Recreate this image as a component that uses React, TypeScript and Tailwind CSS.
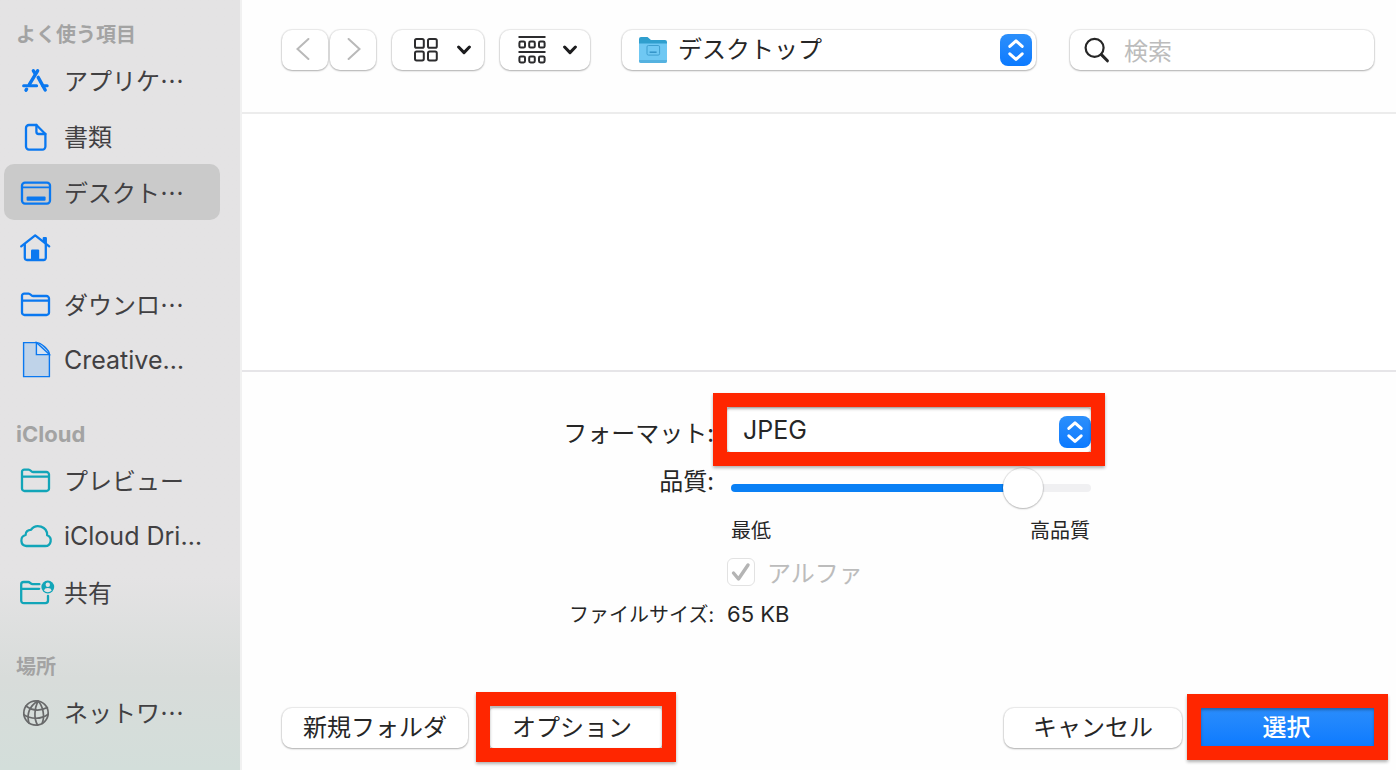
import { useState } from 'react';
import type { ReactNode } from 'react';

const blue = 'text-[#0a78f0]';
const teal = 'text-[#12a5b8]';

function Icon({ children, className = '' }: { children: ReactNode; className?: string }) {
  return (
    <svg
      viewBox="0 0 32 32"
      fill="none"
      stroke="currentColor"
      strokeWidth="2.3"
      strokeLinecap="round"
      strokeLinejoin="round"
      className={`w-8 h-8 shrink-0 overflow-visible ${className}`}
      aria-hidden="true"
    >
      {children}
    </svg>
  );
}

const AppsIcon = () => (
  <Icon className={blue}>
    <g strokeWidth="3.4">
      <path d="M17.6 6.8L9.4 20.4M6.6 25.2L6 26.2" />
      <path d="M13.4 6.8L15 9.4M18.2 13.4L25.2 26" />
      <path d="M3.6 21.7H16.6M22.8 21.7H27.2" strokeWidth="3" />
    </g>
  </Icon>
);

const DocIcon = () => (
  <Icon className={blue}>
    <path d="M9 5H16.4L25.4 14V26.6A3 3 0 0 1 22.4 29.6H9A3 3 0 0 1 6 26.6V8A3 3 0 0 1 9 5Z" />
    <path d="M16.4 5V11.8A2.2 2.2 0 0 0 18.6 14H25.4" />
  </Icon>
);

const DesktopIcon = () => (
  <Icon className={blue}>
    <rect x="2" y="6.6" width="28" height="21" rx="3" />
    <path d="M2 11.4H30" strokeWidth="1.8" />
    <rect x="6.6" y="20.6" width="19" height="4.2" rx="1" fill="currentColor" stroke="none" />
  </Icon>
);

const HomeIcon = () => (
  <Icon className={blue}>
    <path d="M1.2 14.4L15.2 3.4L29.2 14.4" />
    <path d="M23.8 9V6.2H25.8V11.4" />
    <path d="M4.8 12.6V26A2.2 2.2 0 0 0 7 28H23.4A2.2 2.2 0 0 0 25.8 26V12.6" />
    <path d="M11 28.4V18.6A1.2 1.2 0 0 1 12.2 17.4H18A1.2 1.2 0 0 1 19.2 18.6V28.4Z" fill="currentColor" stroke="none" />
  </Icon>
);

const FolderIcon = ({ className }: { className: string }) => (
  <Icon className={className}>
    <path d="M2 12.6V7.8A2.2 2.2 0 0 1 4.2 5.6H8.6C10.6 5.6 11 8 13 8H26.4A2.6 2.6 0 0 1 29 10.6V24.4A2.6 2.6 0 0 1 26.4 27H4.6A2.6 2.6 0 0 1 2 24.4V12.6H29" />
  </Icon>
);

const FileIcon = () => (
  <Icon className={blue}>
    <g strokeWidth="1.4" strokeLinejoin="miter">
      <path d="M3.6 -1.4H16.4C21 -1.4 29.4 6 29.4 10.6V32.6H3.6Z" fill="#bfd3e9" />
      <path d="M16.4 -1.4L29.4 10.6H16.4Z" fill="#d6e3f2" />
    </g>
  </Icon>
);

const CloudIcon = () => (
  <Icon className={teal}>
    <path d="M6.4 26H25.2A5.6 5.6 0 0 0 27.2 15.2A9 9 0 0 0 11 9.8A5 5 0 0 0 5.6 15A5.6 5.6 0 0 0 6.4 26Z" />
  </Icon>
);

const SharedIcon = () => (
  <Icon className={teal}>
    <path d="M19.4 8.2H12.6C10.6 8.2 10.2 6 8.2 6H3.6A2.4 2.4 0 0 0 1.2 8.4V24.6A2.6 2.6 0 0 0 3.8 27.2H25.4A2.6 2.6 0 0 0 28 24.6V19.8M1.2 12.8H19.2" />
    <circle cx="27.8" cy="11" r="6.4" fill="currentColor" stroke="none" />
    <circle cx="27.8" cy="8.8" r="2.2" fill="#e4e3e4" stroke="none" />
    <path d="M23.9 14.4A4 3 0 0 1 31.7 14.4A5.2 5.2 0 0 1 23.9 14.4Z" fill="#e4e3e4" stroke="none" />
  </Icon>
);

const GlobeIcon = () => (
  <Icon className="text-[#68696a]">
    <g strokeWidth="1.7">
      <circle cx="16" cy="17" r="12.2" />
      <path d="M18 4.8C10 10 6.6 18 8.8 26.8M18 4.8C14.6 12 13.4 22 17.6 29.2M18 4.8C23 10 25 20 22.2 27.4" />
      <path d="M6 10C12 14.6 20 15 27.4 11.6M3.8 18.6C11 23.6 21 23.4 28.2 18.2" />
    </g>
  </Icon>
);

const sections = [
  {
    title: 'よく使う項目',
    items: [
      { id: 'apps', label: 'アプリケ…', icon: <AppsIcon /> },
      { id: 'documents', label: '書類', icon: <DocIcon /> },
      { id: 'desktop', label: 'デスクト…', icon: <DesktopIcon /> },
      { id: 'home', label: '', icon: <HomeIcon /> },
      { id: 'downloads', label: 'ダウンロ…', icon: <FolderIcon className={blue} /> },
      { id: 'creative', label: 'Creative…', icon: <FileIcon />, latin: true },
    ],
  },
  {
    title: 'iCloud',
    latin: true,
    items: [
      { id: 'preview', label: 'プレビュー', icon: <FolderIcon className={teal} /> },
      { id: 'drive', label: 'iCloud Dri…', icon: <CloudIcon />, latin: true },
      { id: 'shared', label: '共有', icon: <SharedIcon /> },
    ],
  },
  {
    title: '場所',
    items: [{ id: 'network', label: 'ネットワ…', icon: <GlobeIcon /> }],
  },
];

function Sidebar() {
  const [selected, setSelected] = useState('desktop');

  return (
    <aside className="w-[242px] shrink-0 border-r-2 border-[#f1f1f1] bg-linear-to-b from-[#e4e3e4] from-75% via-[#d8dcda] via-88% to-[#d3deda] pt-4">
      <nav className="flex flex-col gap-7">
        {sections.map((section) => (
          <section key={section.title}>
            <h2
              className={`flex items-center h-9 pl-4 font-bold text-[#a3a3a3] ${
                section.latin ? "text-[22px] font-['Inter',sans-serif]" : 'text-xl'
              }`}
            >
              {section.title}
            </h2>
            {section.items.map((item) => (
              <a
                key={item.id}
                href={`#${item.id}`}
                aria-label={item.label || item.id}
                onClick={() => setSelected(item.id)}
                className={`flex items-center gap-3 h-14 ml-1 mr-5 pl-4 rounded-[10px] text-[#414042] whitespace-nowrap ${
                  selected === item.id ? 'bg-[#cacaca]' : ''
                } ${item.latin ? "text-[25px] font-['Inter',sans-serif]" : 'text-2xl'}`}
              >
                {item.icon}
                <span className={item.latin ? 'pt-0.5' : ''}>{item.label}</span>
              </a>
            ))}
          </section>
        ))}
      </nav>
    </aside>
  );
}

const box = 'bg-white shadow-[0_0_1px_1px_rgba(0,0,0,0.08),0_1px_2px_rgba(0,0,0,0.25)]';

function Stepper() {
  return (
    <svg viewBox="0 0 32 32" className="w-8 h-8 rounded-lg bg-linear-to-b from-[#2b8ffb] to-[#0a7aff]" aria-hidden="true">
      <path
        d="M9.8 12.4L16 6.8L22.2 12.4M9.8 19.8L16 25.4L22.2 19.8"
        fill="none"
        stroke="#fff"
        strokeWidth="3"
        strokeLinecap="round"
        strokeLinejoin="round"
      />
    </svg>
  );
}

function Caret() {
  return (
    <svg viewBox="0 0 14 10" className="w-3.5 h-2.5" aria-hidden="true">
      <path d="M1.6 2L7 7.6L12.4 2" fill="none" stroke="#1c1c1e" strokeWidth="3" strokeLinecap="round" strokeLinejoin="round" />
    </svg>
  );
}

function Toolbar() {
  return (
    <header className="flex items-start h-[114px] pt-[30px] pl-10 pr-[22px] border-b-2 border-[#ececec]">
      <div className="flex gap-0.5">
        <button type="button" aria-label="戻る" className={`flex items-center justify-center w-[46px] h-10 pr-1 pb-0.5 rounded-[10px] ${box}`}>
          <svg viewBox="0 0 14 22" className="w-3.5 h-[22px]" fill="none" stroke="#b9b9b9" strokeWidth="2" strokeLinecap="round">
            <path d="M12.4 1L1.5 11L12.4 21" />
          </svg>
        </button>
        <button type="button" aria-label="進む" className={`flex items-center justify-center w-[46px] h-10 pl-0.5 pb-0.5 rounded-[10px] ${box}`}>
          <svg viewBox="0 0 14 22" className="w-3.5 h-[22px]" fill="none" stroke="#b9b9b9" strokeWidth="2" strokeLinecap="round">
            <path d="M1.6 1L12.5 11L1.6 21" />
          </svg>
        </button>
      </div>

      <button type="button" aria-label="アイコン表示" className={`flex items-center justify-between w-[92px] h-10 ml-4 pl-[22px] pr-[13px] rounded-[10px] ${box}`}>
        <svg viewBox="0 0 24 24" className="w-6 h-6" fill="none" stroke="#2c2c2e" strokeWidth="2">
          <rect x="1" y="1" width="8.8" height="8.8" rx="1.6" />
          <rect x="14" y="1" width="8.8" height="8.8" rx="1.6" />
          <rect x="1" y="13.6" width="8.8" height="8.8" rx="1.6" />
          <rect x="14" y="13.6" width="8.8" height="8.8" rx="1.6" />
        </svg>
        <Caret />
      </button>

      <button type="button" aria-label="グループ" className={`flex items-center justify-between w-[90px] h-10 ml-4 pl-[18px] pr-[13px] rounded-[10px] ${box}`}>
        <svg viewBox="0 0 28 28" className="w-7 h-7" fill="none" stroke="#2c2c2e" strokeWidth="2">
          <path d="M0.5 1H27.5M0.5 16H27.5" />
          <rect x="1.4" y="5.6" width="5.6" height="6" rx="1.4" />
          <rect x="11.2" y="5.6" width="5.6" height="6" rx="1.4" />
          <rect x="21" y="5.6" width="5.6" height="6" rx="1.4" />
          <rect x="1.4" y="20.4" width="5.6" height="6" rx="1.4" />
          <rect x="11.2" y="20.4" width="5.6" height="6" rx="1.4" />
          <rect x="21" y="20.4" width="5.6" height="6" rx="1.4" />
        </svg>
        <Caret />
      </button>

      <div className="relative flex-1 ml-8">
        <select aria-label="場所" className={`block appearance-none w-full h-10 pl-14 pr-10 pb-1 text-2xl text-[#262626] rounded-[10px] ${box}`}>
          <option>デスクトップ</option>
        </select>
        <svg viewBox="0 0 30 28" className="absolute left-4 top-1.5 w-[30px] h-7 pointer-events-none" aria-hidden="true">
          <path d="M1 3A2 2 0 0 1 3 1H9.5L13 4H27A2 2 0 0 1 29 6V12H1Z" fill="#2f9fce" />
          <path d="M1 7.4H29V25A2 2 0 0 1 27 27H3A2 2 0 0 1 1 25Z" fill="#6fc8f3" />
          <path d="M1 24H29V25A2 2 0 0 1 27 27H3A2 2 0 0 1 1 25Z" fill="#55b2e0" />
          <rect x="9" y="9.5" width="12.6" height="9.6" rx="1.4" fill="none" stroke="#3f9fd0" />
          <path d="M11.6 16.2H18.6" stroke="#2f8fc4" strokeWidth="1.4" />
        </svg>
        <span className="absolute right-1 top-1 pointer-events-none">
          <Stepper />
        </span>
      </div>

      <label className={`flex items-center gap-3.5 w-[304px] h-10 ml-[34px] pl-3.5 rounded-[10px] ${box}`}>
        <svg viewBox="0 0 26 26" className="w-[26px] h-[26px] shrink-0" fill="none" stroke="#262626" strokeLinecap="round" aria-hidden="true">
          <circle cx="10.6" cy="10.8" r="9" strokeWidth="2.2" />
          <path d="M17.4 17.6L23.4 23.8" strokeWidth="3" />
        </svg>
        <input type="search" placeholder="検索" aria-label="検索" className="w-full min-w-0 text-2xl outline-none placeholder:text-[#bcbcbc]" />
      </label>
    </header>
  );
}

// Red rectangle drawn over a control to call it out
function Callout({ className }: { className: string }) {
  return (
    <span
      className={`absolute pointer-events-none border-14 border-[#ff2600] shadow-[0_2px_3px_rgba(0,0,0,0.3),inset_0_2px_3px_rgba(0,0,0,0.3)] ${className}`}
    />
  );
}

function ExportOptions() {
  const [quality, setQuality] = useState(85);

  return (
    <form className="grid grid-cols-[150px_364px] justify-center gap-x-3 pl-[18px] pt-9 text-2xl text-[#262626]">
      <label htmlFor="format" className="flex items-center justify-end h-12 pr-px whitespace-nowrap">
        フォーマット:
      </label>
      <div className="relative h-11">
        <select id="format" className={`block appearance-none w-full h-11 pl-4 pt-0.5 text-[25px] font-['Inter',sans-serif] rounded-sm ${box}`}>
          <option>JPEG</option>
          <option>PNG</option>
          <option>TIFF</option>
        </select>
        <span className="absolute right-0 top-2 pointer-events-none">
          <Stepper />
        </span>
        <Callout className="-top-[15px] -bottom-3.5 -left-3.5 -right-3.5" />
      </div>

      <label htmlFor="quality" className="flex items-center justify-end h-16 pr-px pb-4">
        品質:
      </label>
      <div className="flex items-center h-16 pl-1">
        <input
          id="quality"
          type="range"
          value={quality}
          onChange={(e) => setQuality(Number(e.target.value))}
          style={{ backgroundImage: `linear-gradient(to right, #0a80f5 ${quality}%, #f0f0f2 ${quality}%)` }}
          className="appearance-none w-full h-2 rounded-full [&::-webkit-slider-thumb]:appearance-none [&::-webkit-slider-thumb]:w-10 [&::-webkit-slider-thumb]:h-10 [&::-webkit-slider-thumb]:rounded-full [&::-webkit-slider-thumb]:bg-white [&::-webkit-slider-thumb]:shadow-[0_0_1px_1px_rgba(0,0,0,0.1),0_1px_2px_rgba(0,0,0,0.2)]"
        />
      </div>

      <div className="col-start-2 flex justify-between h-8 pl-1 pr-px text-xl leading-5">
        <span>最低</span>
        <span>高品質</span>
      </div>

      <label className="col-start-2 flex items-center gap-3 h-10 text-[#bcbcbc]">
        <span className="grid place-items-center">
          <input
            type="checkbox"
            defaultChecked
            disabled
            className="col-start-1 row-start-1 appearance-none w-7 h-7 rounded-md border border-[#e2e2e2] bg-white"
          />
          <svg viewBox="0 0 20 20" className="col-start-1 row-start-1 w-5 h-5 pointer-events-none" aria-hidden="true">
            <path d="M2.5 11L7.5 17L17 3" fill="none" stroke="#b4b4b4" strokeWidth="3.4" strokeLinecap="round" strokeLinejoin="round" />
          </svg>
        </span>
        アルファ
      </label>

      <span className="flex items-center justify-end h-11 pr-px text-xl whitespace-nowrap">ファイルサイズ:</span>
      <span className="flex items-center h-11 pt-0.5 text-[22px] font-['Inter',sans-serif]">65 KB</span>
    </form>
  );
}

function Actions() {
  return (
    <footer className="flex items-center mt-auto pl-10 pr-[22px] pb-[22px] text-2xl text-[#262626]">
      <button type="button" className={`w-[186px] h-10 pb-1 leading-9 rounded-[10px] ${box}`}>
        新規フォルダ
      </button>
      <div className="relative ml-[22px]">
        <button type="button" className={`w-[172px] h-10 pr-2 pb-1 leading-9 rounded-sm ${box}`}>
          オプション
        </button>
        <Callout className="-top-4 -bottom-3.5 -left-3.5 -right-3.5" />
      </div>
      <button type="button" className={`w-[178px] h-10 pb-1 leading-9 ml-auto rounded-[10px] ${box}`}>
        キャンセル
      </button>
      <div className="relative ml-[19px]">
        <button type="submit" className="w-[173px] h-10 pr-0.5 pb-1 leading-9 text-white font-medium bg-linear-to-b from-[#2a8dfc] to-[#0a7aff]">
          選択
        </button>
        <Callout className="-top-3.5 -bottom-3 -left-3.5 -right-3.5" />
      </div>
    </footer>
  );
}

export default function App() {
  return (
    <div lang="ja" className="flex min-h-screen bg-white font-['Noto_Sans_CJK_JP',sans-serif]">
      <Sidebar />
      <main className="flex flex-col flex-1 min-w-0 bg-[#fefefe]">
        <Toolbar />
        <div className="h-[258px] border-b-2 border-[#e6e5e8] bg-white" />
        <ExportOptions />
        <Actions />
      </main>
    </div>
  );
}
